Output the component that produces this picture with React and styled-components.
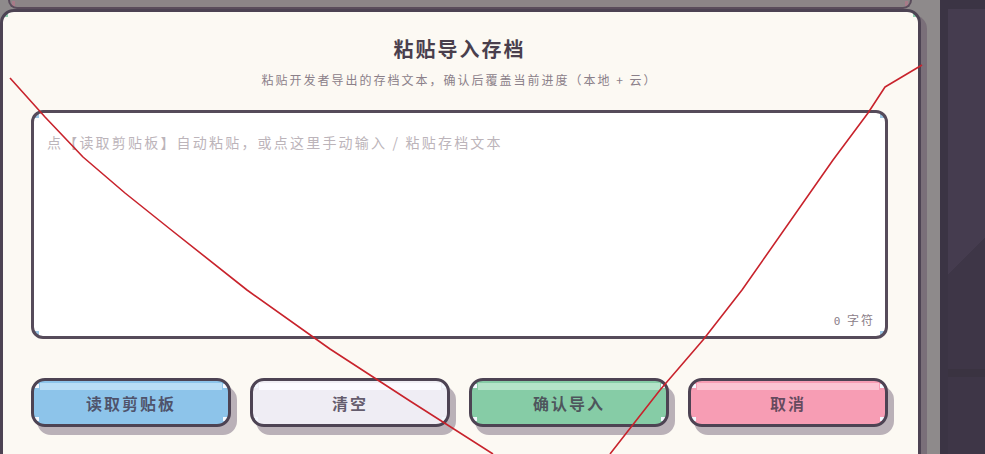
import React, { useState } from "react";
import styled, { createGlobalStyle } from "styled-components";

const GlobalStyle = createGlobalStyle`
  html, body {
    margin: 0;
    padding: 0;
    background: #8e8a8b;
    overflow: hidden;
  }
  * {
    box-sizing: border-box;
  }
`;

const INK = "#4d4353";
const FONT = `"Noto Sans CJK SC", "Noto Sans", sans-serif`;

// little square "pixel" studs sitting in the four corners of a box
const studs = (color, size, x, y) => `
  linear-gradient(${color}, ${color}) left ${x}px top ${y}px / ${size}px ${size}px no-repeat,
  linear-gradient(${color}, ${color}) right ${x}px top ${y}px / ${size}px ${size}px no-repeat,
  linear-gradient(${color}, ${color}) left ${x}px bottom ${y}px / ${size}px ${size}px no-repeat,
  linear-gradient(${color}, ${color}) right ${x}px bottom ${y}px / ${size}px ${size}px no-repeat
`;

const Screen = styled.div`
  position: relative;
  display: flex;
  width: 985px;
  height: 454px;
  overflow: hidden;
  font-family: ${FONT};
`;

const Backdrop = styled.div`
  width: 940px;
  flex-shrink: 0;
  display: flex;
  flex-direction: column;
`;

const PeekBar = styled.div`
  height: 9px;
  flex-shrink: 0;
  margin: 0 28px 0 8px;
  background: ${studs("#a77a88", 3, 2, 1)}, #8c8587;
  border: 2px solid #5a4c5b;
  border-top: none;
  border-radius: 0 0 10px 10px;
`;

const Card = styled.div`
  width: 921px;
  height: 470px;
  flex-shrink: 0;
  padding: 23px 30px 0 28px;
  background: linear-gradient(#8fcfb0, #8fcfb0) left 1px top 1px / 4px 4px no-repeat,
    linear-gradient(#8fcfb0, #8fcfb0) right 1px top 1px / 4px 4px no-repeat, #fcf9f3;
  border: 3px solid ${INK};
  border-radius: 14px;
  box-shadow: 6px 6px 0 #7a6f79;
  display: flex;
  flex-direction: column;
`;

const Title = styled.h2`
  margin: 0;
  font-size: 20px;
  line-height: 28px;
  font-weight: 700;
  letter-spacing: 2px;
  text-align: center;
  color: #4a3f4d;
`;

const Subtitle = styled.p`
  margin: 8px 0 0;
  font-size: 12px;
  line-height: 18px;
  letter-spacing: 2px;
  text-align: center;
  color: #8b8089;
`;

const Field = styled.div`
  margin-top: 21px;
  height: 229px;
  flex-shrink: 0;
  display: flex;
  flex-direction: column;
  background: ${studs("#9cc8e6", 4, 1, 1)}, #ffffff;
  border: 3px solid #564b5a;
  border-radius: 12px;
`;

const TextInput = styled.textarea`
  flex: 1;
  resize: none;
  border: none;
  outline: none;
  background: transparent;
  padding: 19px 13px 0;
  font-family: ${FONT};
  font-size: 14px;
  line-height: 20px;
  letter-spacing: 2.2px;
  color: #4a3f4d;

  &::placeholder {
    color: #bcb4ba;
  }
`;

const Counter = styled.div`
  align-self: flex-end;
  padding: 0 10px 6px 0;
  font-size: 12px;
  line-height: 16px;
  letter-spacing: 2px;
  color: #8b8089;

  b {
    font-weight: 400;
    font-family: "DejaVu Sans Mono", monospace;
    font-size: 11px;
  }
`;

const ButtonRow = styled.div`
  margin-top: 39px;
  flex-shrink: 0;
  display: grid;
  grid-template-columns: repeat(4, 1fr);
  gap: 19px;
`;

const tones = {
  blue: { base: "#8dc4ea", shine: "#b9ddf5" },
  plain: { base: "#efedf4", shine: "#fbfaff" },
  green: { base: "#86cca6", shine: "#b4e3c8" },
  pink: { base: "#f79db4", shine: "#fcc4d2" },
};

const Button = styled.button`
  height: 49px;
  border: 3px solid ${INK};
  border-radius: 14px;
  box-shadow: 6px 8px 0 #bab1b8;
  background: ${studs("#f4f8ff", 4, 1, 3)},
    linear-gradient(
        ${({ $tone }) => tones[$tone].shine},
        ${({ $tone }) => tones[$tone].shine}
      )
      left 6px top 2px / calc(100% - 12px) 7px no-repeat,
    ${({ $tone }) => tones[$tone].base};
  font-family: ${FONT};
  font-size: 16px;
  font-weight: 700;
  letter-spacing: 2px;
  color: rgba(62, 52, 72, 0.78);
  cursor: pointer;
`;

const SidePanel = styled.div`
  flex: 1;
  background: #3b3444;
  padding: 9px 0 0 8px;
  display: flex;
`;

const SideInner = styled.div`
  flex: 1;
  background: linear-gradient(180deg, transparent 360px, #3a3341 360px, #3a3341 368px, transparent 368px),
    linear-gradient(135deg, #453c4f 55%, #3e3647 55%);
`;

// hand-drawn red strokes scribbled across the dialog
const Scribble = () => (
  <svg
    width="985"
    height="454"
    style={{ position: "absolute", left: 0, top: 0, pointerEvents: "none" }}
  >
    <polyline
      points="10,78 45,117 83,157 125,193 170,229 247,290 330,349 410,401 493,454"
      fill="none"
      stroke="#c8232c"
      strokeWidth="1.6"
      strokeLinejoin="round"
    />
    <polyline
      points="922,65 885,87 868,113 833,160 742,290 703,340 660,390 610,454"
      fill="none"
      stroke="#c8232c"
      strokeWidth="1.6"
      strokeLinejoin="round"
    />
  </svg>
);

export default function App() {
  const [text, setText] = useState("");

  return (
    <Screen>
      <GlobalStyle />
      <Backdrop>
        <PeekBar />
        <Card>
          <Title>粘贴导入存档</Title>
          <Subtitle>粘贴开发者导出的存档文本，确认后覆盖当前进度（本地 + 云）</Subtitle>
          <Field>
            <TextInput
              value={text}
              onChange={(e) => setText(e.target.value)}
              placeholder="点【读取剪贴板】自动粘贴，或点这里手动输入 / 粘贴存档文本"
            />
            <Counter>
              <b>{text.length}</b> 字符
            </Counter>
          </Field>
          <ButtonRow>
            <Button $tone="blue">读取剪贴板</Button>
            <Button $tone="plain" onClick={() => setText("")}>
              清空
            </Button>
            <Button $tone="green">确认导入</Button>
            <Button $tone="pink">取消</Button>
          </ButtonRow>
        </Card>
      </Backdrop>
      <SidePanel>
        <SideInner />
      </SidePanel>
      <Scribble />
    </Screen>
  );
}
